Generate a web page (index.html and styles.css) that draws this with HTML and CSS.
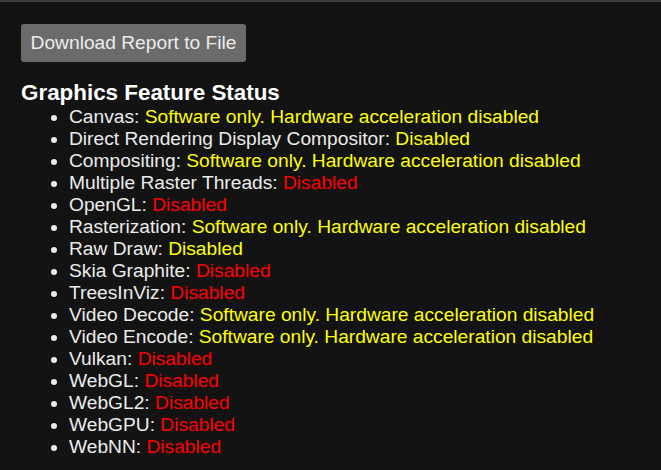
FILE: index.html
```html
<!doctype html>
<html lang="en">
<head>
    <meta charset="utf-8" />
    <title>GPU</title>
    <link rel="stylesheet" href="styles.css">
</head>
<body>
    <div class="topline"></div>
    <div class="page">
        <button class="download">Download Report to File</button>

        <h3 class="title">Graphics Feature Status</h3>
        <ul class="features">
            <li>Canvas: <span class="sw">Software only. Hardware acceleration disabled</span></li>
            <li>Direct Rendering Display Compositor: <span class="sw">Disabled</span></li>
            <li>Compositing: <span class="sw">Software only. Hardware acceleration disabled</span></li>
            <li>Multiple Raster Threads: <span class="off">Disabled</span></li>
            <li>OpenGL: <span class="off">Disabled</span></li>
            <li>Rasterization: <span class="sw">Software only. Hardware acceleration disabled</span></li>
            <li>Raw Draw: <span class="sw">Disabled</span></li>
            <li>Skia Graphite: <span class="off">Disabled</span></li>
            <li>TreesInViz: <span class="off">Disabled</span></li>
            <li>Video Decode: <span class="sw">Software only. Hardware acceleration disabled</span></li>
            <li>Video Encode: <span class="sw">Software only. Hardware acceleration disabled</span></li>
            <li>Vulkan: <span class="off">Disabled</span></li>
            <li>WebGL: <span class="off">Disabled</span></li>
            <li>WebGL2: <span class="off">Disabled</span></li>
            <li>WebGPU: <span class="off">Disabled</span></li>
            <li>WebNN: <span class="off">Disabled</span></li>
        </ul>
    </div>
</body>
</html>
```

FILE: styles.css
```css
body {
    margin: 0;
    background: #131313;
    color: #ececec;
    font-family: "Liberation Sans", Arial, sans-serif;
    font-size: 19.2px;
}
.topline {
    height: 2px;
    background: #3b3b40;
}
.page {
    padding: 22px 21px 0;
}
.download {
    display: block;
    background: #6b6b6b;
    color: #ececec;
    border: none;
    border-radius: 3px;
    font-family: inherit;
    font-size: 19.2px;
    padding: 8px 9.6px;
    line-height: 22px;
}
.title {
    margin: 18px 0 0;
    font-size: 22.4px;
    line-height: 26px;
    font-weight: bold;
    color: #fff;
}
.features {
    margin: 0;
    padding-left: 48px;
    line-height: 22px;
}
.sw {
    color: #ffff00;
}
.off {
    color: #ff0000;
}
```
